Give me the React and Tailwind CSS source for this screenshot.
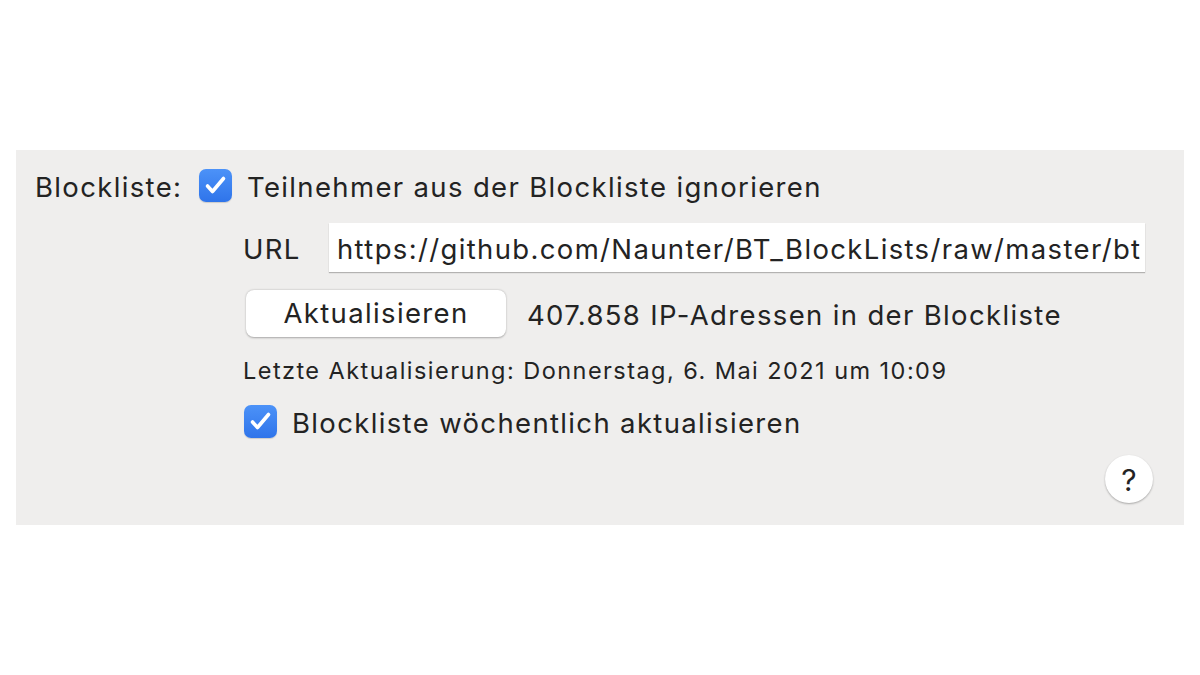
import React from 'react';

const font = { fontFamily: 'Inter, "Noto Sans", sans-serif' };

function Checkbox() {
  return (
    <span className="flex h-[33px] w-[33px] shrink-0 items-center justify-center rounded-[7px] bg-gradient-to-b from-[#4c92f8] to-[#2f74ea] shadow-[0_1px_1px_rgba(0,0,0,0.15)]">
      <svg width="33" height="33" viewBox="0 0 33 33" fill="none">
        <path d="M8.5 17 L13.5 22.5 L24.5 9.5" stroke="#fff" strokeWidth="3.6" strokeLinecap="round" strokeLinejoin="round" />
      </svg>
    </span>
  );
}

export default function App() {
  return (
    <div className="h-[675px] w-[1200px] bg-white pt-[150px] pl-[16px]" style={font}>
      <div className="flex h-[375px] w-[1168px] flex-col bg-[#efeeed] text-[27.5px] leading-[33px] tracking-[1.35px] text-[#232323]">
        {/* Blockliste Zeile */}
        <div className="mt-[19px] flex h-[33px] items-center">
          <span className="ml-[19px] w-[164px] pt-[3px]">Blockliste:</span>
          <Checkbox />
          <span className="ml-[15px] pt-[3px]">Teilnehmer aus der Blockliste ignorieren</span>
        </div>

        <div className="ml-[227px] flex flex-col">
          {/* URL */}
          <div className="mt-[21px] flex h-[49px] items-center">
            <span className="w-[86px] pt-[4px]">URL</span>
            <div className="flex h-[49px] w-[816px] items-center overflow-hidden bg-white pt-[4px] pl-[8px] shadow-[0_1px_1px_rgba(0,0,0,0.25)] whitespace-nowrap">
              https://github.com/Naunter/BT_BlockLists/raw/master/bt
            </div>
          </div>

          {/* Aktualisieren */}
          <div className="mt-[18px] flex h-[47px] items-center">
            <button className="ml-[3px] h-[47px] w-[260px] rounded-[8px] bg-white text-[#232323] shadow-[0_0.5px_2px_rgba(0,0,0,0.3)]">
              Aktualisieren
            </button>
            <span className="ml-[21px] pt-[3px]">407.858 IP-Adressen in der Blockliste</span>
          </div>

          <div className="mt-[18px] h-[30px] pt-[1px] text-[23.5px] leading-[30px] tracking-[1.45px]">
            Letzte Aktualisierung: Donnerstag, 6. Mai 2021 um 10:09
          </div>

          <div className="mt-[20px] flex h-[33px] items-center">
            <span className="ml-[1px]">
              <Checkbox />
            </span>
            <span className="ml-[15px] pt-[3px]">Blockliste wöchentlich aktualisieren</span>
          </div>
        </div>

        <div className="mt-[17px] flex justify-end pr-[31px]">
          <button className="flex h-[48px] w-[48px] items-center justify-center rounded-full bg-white pt-[2px] text-[30px] tracking-normal text-[#232323] shadow-[0_1px_2px_rgba(0,0,0,0.3)]">
            ?
          </button>
        </div>
      </div>
    </div>
  );
}
